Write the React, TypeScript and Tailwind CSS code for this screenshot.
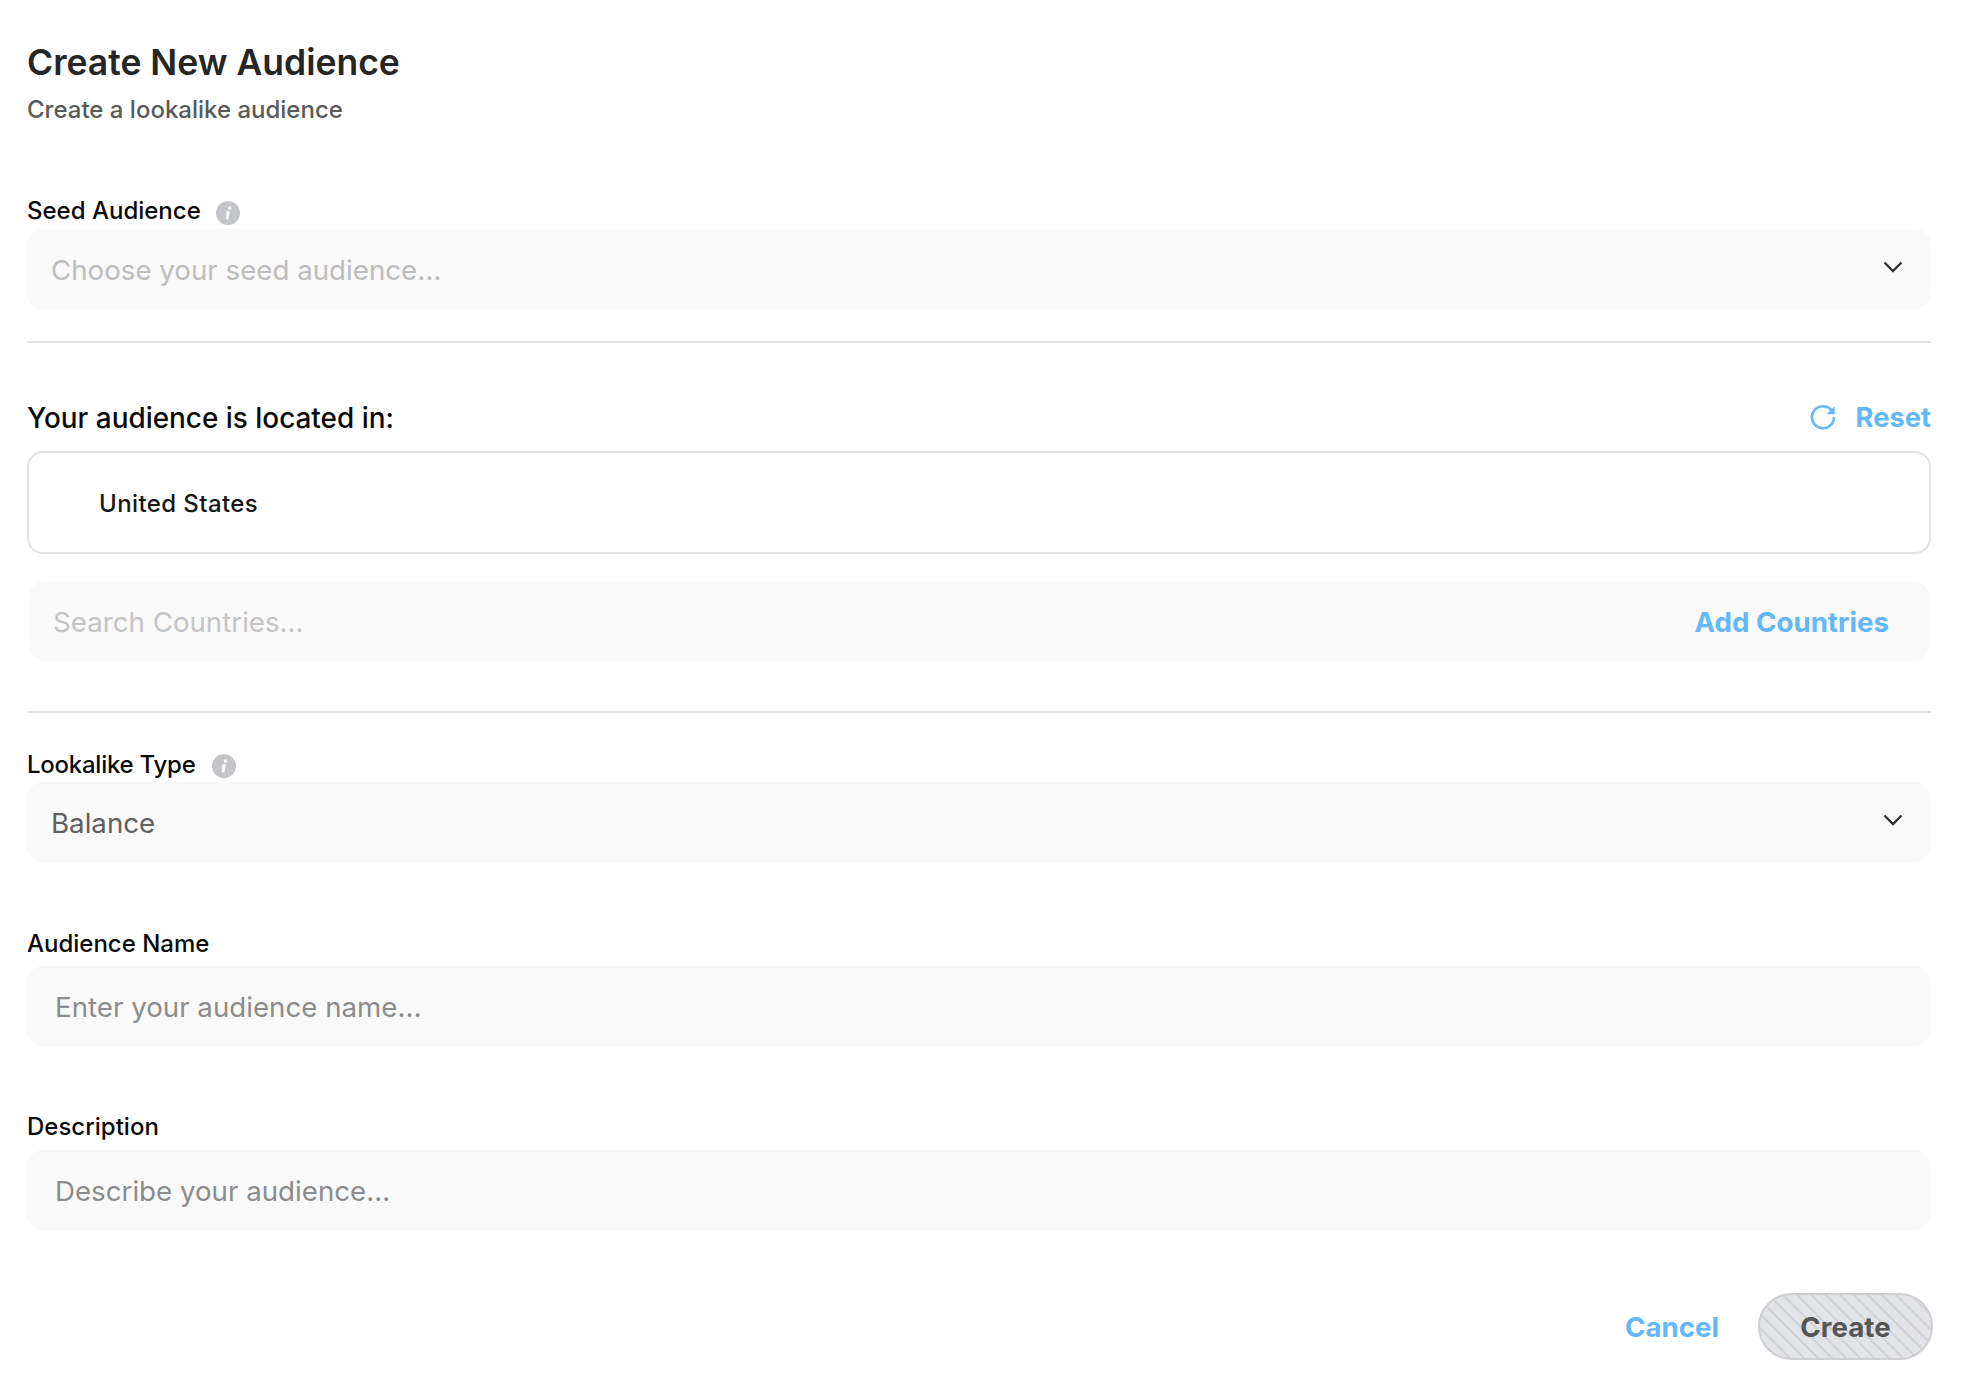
import React from "react";

const font = "[font-family:Inter,'Liberation_Sans',sans-serif]";

function Info({ className = "ml-[15px]" }: { className?: string }) {
  return (
    <svg width="24" height="24" viewBox="0 0 24 24" className={`${className} mt-[7px] shrink-0`}>
      <circle cx="12" cy="12" r="12" fill="#c3c5c9" />
      <circle cx="13.6" cy="7" r="1.7" fill="#fff" />
      <path d="M10.4 10.2h3.5l-1.6 8h-2.5z" fill="#fff" />
    </svg>
  );
}

function Chevron() {
  return (
    <svg width="20" height="12" viewBox="0 0 20 12" fill="none" className="mb-[8px] shrink-0">
      <path d="M1.5 1.5L10 10L18.5 1.5" stroke="#333" strokeWidth="2.4" />
    </svg>
  );
}

function Field({ children, className = "" }: { children: React.ReactNode; className?: string }) {
  return (
    <div className={`flex h-[80px] items-center rounded-[16px] bg-[#f9f9f9] pt-[3px] text-[27.7px] ${className}`}>
      {children}
    </div>
  );
}

export default function App() {
  return (
    <div className={`h-[1376px] w-[1970px] bg-white pl-[27px] pr-[39px] ${font}`}>
      <h1 className="pt-[40px] text-[35.5px] leading-[46px] font-semibold text-[#262626]">Create New Audience</h1>
      <p className="mt-[6px] text-[24px] leading-[36px] font-medium text-[#5a5a5a]">Create a lookalike audience</p>

      <div className="mt-[66px] flex h-[35px] items-start">
        <span className="text-[24px] leading-[34px] font-medium text-[#0a0a0a]">Seed Audience</span>
        <Info />
      </div>
      <Field className="justify-between pl-[24px] pr-[28px] text-[#bdbdbd]">
        <span>Choose your seed audience...</span>
        <Chevron />
      </Field>
      <div className="mt-[32px] h-[2px] bg-[#e2e2e2]" />

      <div className="mt-[56px] flex h-[52px] items-center justify-between pb-[14px]">
        <span className="text-[27.9px] leading-[36px] font-medium text-[#0a0a0a]">Your audience is located in:</span>
        <span className="flex items-center text-[27.3px] font-bold text-[#63b7fb]">
          <svg width="26" height="26" viewBox="0 0 26 26" fill="none" className="mb-[2px] mr-[20px]">
            <path d="M21.5 6.2A11 11 0 1 0 24 13" stroke="#63b7fb" strokeWidth="2.6" />
            <path d="M24.6 2.2v8h-8z" fill="#63b7fb" />
          </svg>
          Reset
        </span>
      </div>
      <div className="flex h-[103px] items-center rounded-[16px] border-2 border-[#e2e2e2] pl-[70px] pt-[2px] text-[24px] font-medium tracking-[0.4px] text-[#171717]">
        United States
      </div>
      <Field className="mx-[2px] mt-[27px] justify-between pl-[24px] pr-[40px] text-[#c4c4c4]">
        <span>Search Countries...</span>
        <span className="font-bold text-[#63b7fb]">Add Countries</span>
      </Field>
      <div className="mt-[50px] h-[2px] bg-[#e2e2e2]" />

      <div className="mt-[34px] flex h-[35px] items-start">
        <span className="text-[24px] leading-[36px] font-medium tracking-[-0.25px] text-[#0a0a0a]">Lookalike Type</span>
        <Info className="ml-[17px]" />
      </div>
      <Field className="justify-between pl-[24px] pr-[28px] text-[#5f5f5f]">
        <span>Balance</span>
        <Chevron />
      </Field>

      <div className="mt-[64px] h-[40px] text-[24px] leading-[36px] font-medium text-[#0a0a0a]">Audience Name</div>
      <Field className="pl-[28px] text-[#8c8c8c]">Enter your audience name...</Field>

      <div className="mt-[63px] h-[41px] text-[24px] leading-[36px] font-medium text-[#0a0a0a]">Description</div>
      <Field className="pl-[28px] text-[#8c8c8c]">Describe your audience...</Field>

      <div className="-mr-[2px] mt-[63px] flex items-center justify-end">
        <span className="mr-[39px] pt-[2px] text-[27.7px] font-bold text-[#63b7fb]">Cancel</span>
        <div className="flex h-[67px] w-[175px] items-center justify-center rounded-full border-2 border-[#cfcfd1] bg-[#e2e3e6] bg-[repeating-linear-gradient(45deg,#d2d3d6_0,#d2d3d6_2px,transparent_2px,transparent_10px)] pt-[2px] text-[27.7px] font-bold text-[#555555]">
          Create
        </div>
      </div>
    </div>
  );
}
